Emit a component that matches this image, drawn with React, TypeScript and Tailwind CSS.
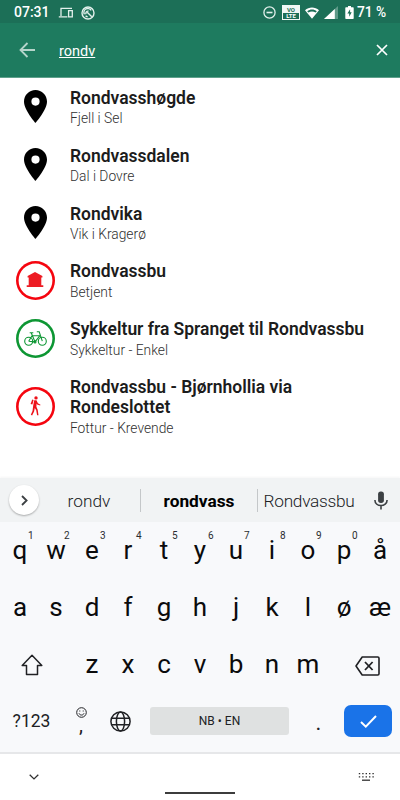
import type { ReactNode } from 'react';
import clsx from 'clsx';

type ResultIcon = 'pin' | 'cabin' | 'bike' | 'hike';

interface SearchResult {
  title: string;
  subtitle: string;
  icon: ResultIcon;
}

interface KeyDef {
  label: string;
  hint?: string;
}

const RESULTS: SearchResult[] = [
  { title: 'Rondvasshøgde', subtitle: 'Fjell i Sel', icon: 'pin' },
  { title: 'Rondvassdalen', subtitle: 'Dal i Dovre', icon: 'pin' },
  { title: 'Rondvika', subtitle: 'Vik i Kragerø', icon: 'pin' },
  { title: 'Rondvassbu', subtitle: 'Betjent', icon: 'cabin' },
  { title: 'Sykkeltur fra Spranget til Rondvassbu', subtitle: 'Sykkeltur - Enkel', icon: 'bike' },
  { title: 'Rondvassbu - Bjørnhollia via Rondeslottet', subtitle: 'Fottur - Krevende', icon: 'hike' },
];

const TOP_ROW: KeyDef[] = [
  { label: 'q', hint: '1' },
  { label: 'w', hint: '2' },
  { label: 'e', hint: '3' },
  { label: 'r', hint: '4' },
  { label: 't', hint: '5' },
  { label: 'y', hint: '6' },
  { label: 'u', hint: '7' },
  { label: 'i', hint: '8' },
  { label: 'o', hint: '9' },
  { label: 'p', hint: '0' },
  { label: 'å' },
];

const HOME_ROW: KeyDef[] = [...'asdfghjkløæ'].map((label) => ({ label }));
const BOTTOM_ROW: KeyDef[] = [...'zxcvbnm'].map((label) => ({ label }));

function StatusBar() {
  return (
    <div className="flex h-[23px] items-center bg-[#1c6f57] pt-[2px] pl-[14px] text-[14px] font-medium text-white">
      <span className="w-[44px] whitespace-nowrap">07:31</span>
      {/* Connected devices */}
      <svg className="h-[12px] w-[16px]" viewBox="0 0 16 12" fill="none" stroke="#e3f0ec" strokeWidth="1.3">
        <path d="M14 1.4H3V9M.8 9.9h8.6" />
        <path d="M10.6 3.7h3.7v6.2h-3.7z" />
      </svg>
      <svg className="ml-[7px] h-[14px] w-[14px]" viewBox="0 0 14 14" fill="none" stroke="#e3f0ec" strokeWidth="1.4">
        <circle cx="7" cy="7" r="6" />
        <path d="M3.4 8.4a3.8 3.8 0 0 1 6.8-4M5 8.2a2.2 2.2 0 0 1 2.6-3M6.2 6.2l4.6 4.6M4.6 10l2 .8" />
      </svg>
      {/* Do not disturb */}
      <svg className="ml-[168px] h-[13px] w-[13px]" viewBox="0 0 13 13" fill="none" stroke="#e3f0ec" strokeWidth="1.3">
        <circle cx="6.5" cy="6.5" r="5.6" />
        <path d="M3.5 6.5h6" strokeWidth="1.6" />
      </svg>
      <span className="ml-[6px] flex h-[15px] w-[18px] flex-col border border-[#f0f7f5] text-center text-[6px] leading-[7px] font-bold">
        <span className="h-[7px] bg-[#f0f7f5] text-[#1c6f57]">VO</span>
        <span className="h-[6px] leading-[6px]">LTE</span>
      </span>
      <svg className="ml-[5px] h-[12px] w-[14px]" viewBox="0 0 14 12">
        <path d="M0 3.2C4 -.4 10 -.4 14 3.2L7 11.8z" fill="#fff" />
        <path d="M2.2 4.2C5 2 9 2 11.8 4.2L10.6 5.6C8.5 4 5.5 4 3.4 5.6z" fill="#1c6f57" />
      </svg>
      <svg className="ml-[5px] h-[13px] w-[14px]" viewBox="0 0 14 13">
        <path d="M0 13 14 0v13z" fill="#5f9a89" />
        <path d="M0 13 10.8 3v10z" fill="#fff" />
      </svg>
      <svg className="ml-[7px] h-[13px] w-[9px]" viewBox="0 0 9 13">
        <path d="M3 0h3v1.3h2q.7 0 .7.7v10.3q0 .7-.7.7H1q-.7 0-.7-.7V2q0-.7.7-.7h2z" fill="#fff" />
        <path d="M5.1 3.2 2.4 7.6h1.8v3.2l2.5-4.5H5.1z" fill="#1c6f57" />
      </svg>
      <span className="ml-[3px] text-[13.8px] whitespace-nowrap">71 %</span>
    </div>
  );
}

function SearchBar() {
  return (
    <div className="flex h-[55px] items-center border-b border-[#5fa18c] bg-[#1e7b5f] pr-[12px] pl-[19px] text-white">
      <svg className="h-[16px] w-[16px]" viewBox="0 0 16 16" fill="none" stroke="#b5d5cb" strokeWidth="1.8">
        <path d="M8.5 1 1.5 8l7 7M1.5 8H16" />
      </svg>
      <span className="ml-[24px] pt-[3px] text-[14.5px] underline decoration-1 underline-offset-1">rondv</span>
      <svg className="ml-auto h-[12px] w-[12px]" viewBox="0 0 12 12" fill="none" stroke="#fff" strokeWidth="1.7">
        <path d="m1 1 10 10M11 1 1 11" />
      </svg>
    </div>
  );
}

function PinIcon() {
  return (
    <svg className="h-[33px] w-[23px]" viewBox="0 0 14 20" preserveAspectRatio="none">
      <path
        d="M7 0C3.13 0 0 3.13 0 7c0 5.25 7 13 7 13s7-7.75 7-13c0-3.87-3.13-7-7-7zm0 9.5a2.5 2.5 0 0 1 0-5 2.5 2.5 0 0 1 0 5z"
        fill="#000"
      />
    </svg>
  );
}

function RoundIcon({ green = false, children }: { green?: boolean; children: ReactNode }) {
  return (
    <span
      className={clsx(
        'flex size-[39px] items-center justify-center rounded-full',
        green ? 'shadow-[inset_0_0_0_2.6px_#0d9633]' : 'shadow-[inset_0_0_0_2.6px_#f5050f]'
      )}
    >
      {children}
    </span>
  );
}

function ResultGlyph({ icon }: { icon: ResultIcon }) {
  switch (icon) {
    case 'cabin':
      return (
        <RoundIcon>
          <svg className="mb-[2px] h-[15px] w-[18px]" viewBox="0 0 18 15" fill="#ed1c24">
            <path d="M9 0 16.4 4v1.6h-1.1v7.6h2V15H.7v-1.8h2V5.6H1.6V4z" />
          </svg>
        </RoundIcon>
      );
    case 'bike':
      return (
        <RoundIcon green>
          <svg className="h-[15px] w-[23px]" viewBox="0 0 23 15" fill="none" stroke="#0d9633" strokeWidth="1.1">
            <circle cx="4.7" cy="10.2" r="4" />
            <circle cx="18.3" cy="10.2" r="4" />
            <path d="M4.7 10.2 8 4.8h7.8L11 10.9 7.3 2M4.7 10.2l6.3.7M18.3 10.2 15.2.8h-2.4M5.7 1.8h3.6" />
            <circle cx="11" cy="10.9" r="1" />
          </svg>
        </RoundIcon>
      );
    case 'hike':
      return (
        <RoundIcon>
          <svg className="h-[20px] w-[11px]" viewBox="0 0 11 20" fill="#ed1119">
            <circle cx="6" cy="1.9" r="1.7" />
            <path d="M2.2 3.4 3.6 4 2.4 8.6.6 8.1z" />
            <path d="M4.2 4.3h2.3l1.4 3 2.6 1.4-.4.9-3-1.2-.5-.8-.2 3.1 1.3 3 .8 5.6H7.1l-.9-5-1.4-2.3-.7 3.4-2 4.1-1.3-.7 1.7-3.8.7-5.5z" />
          </svg>
        </RoundIcon>
      );
    default:
      return <PinIcon />;
  }
}

function ResultRow({ title, subtitle, icon }: SearchResult) {
  return (
    <li className="flex items-center pt-[8px] pr-[30px] pb-[7px]">
      <span className="flex w-[70px] shrink-0 justify-center pb-[1px]">
        <ResultGlyph icon={icon} />
      </span>
      <div className="min-w-0 pt-[2px]">
        <p className="text-[17.5px] leading-[20.4px] font-semibold tracking-[-0.02px] text-[#1c1c1c]">{title}</p>
        <p className="pt-[1px] text-[13.8px] leading-[19.4px] font-[350] text-[#303030]">{subtitle}</p>
      </div>
    </li>
  );
}

function SuggestionBar() {
  return (
    <div className="flex h-[44px] items-center bg-[#f1f3f4] text-[17.3px] text-[#202124] shadow-[0_-1px_2px_rgba(0,0,0,0.04)]">
      <span className="ml-[9px] flex size-[30px] shrink-0 items-center justify-center rounded-full bg-white shadow-[0_1px_2px_rgba(0,0,0,0.3)]">
        <svg className="h-[11px] w-[7px]" viewBox="0 0 7 11" fill="none" stroke="#3c4043" strokeWidth="1.8">
          <path d="m1 1 4.6 4.5L1 10" />
        </svg>
      </span>
      <span className="ml-[-1px] w-[102px] pt-[3px] text-center font-[350]">rondv</span>
      <span className="h-[23px] w-px bg-[#c4c7c9]" />
      <span className="w-[116px] pt-[3px] text-center font-bold text-black">rondvass</span>
      <span className="h-[23px] w-px bg-[#c4c7c9]" />
      <span className="w-[102px] pt-[3px] text-center font-[350] tracking-[-0.3px]">Rondvassbu</span>
      <svg className="ml-[14px] h-[19px] w-[14px]" viewBox="0 0 14 19" fill="none" stroke="#3c4043">
        <rect x="4.1" y=".5" width="5.8" height="11.5" rx="2.7" fill="#3c4043" stroke="none" />
        <path d="M.9 9c0 7.4 12.2 7.4 12.2 0M7 14.6v4" strokeWidth="1.6" />
      </svg>
    </div>
  );
}

function Key({ label, hint }: KeyDef) {
  return (
    <span className="relative flex h-[57px] w-[36px] items-center justify-center pb-[2px] text-[26px] leading-none text-[#0b0b0c]">
      {label}
      {hint && <span className="absolute top-[9px] left-[26px] text-[10px] leading-none text-[#2b2d30]">{hint}</span>}
    </span>
  );
}

function KeyRow({ keys }: { keys: KeyDef[] }) {
  return (
    <div className="flex justify-center">
      {keys.map((key) => (
        <Key key={key.label} {...key} />
      ))}
    </div>
  );
}

function FunctionRow() {
  return (
    <div className="flex h-[56px] items-center text-[#202124]">
      <span className="w-[62px] pl-[1px] text-center text-[17.5px]">?123</span>
      <span className="flex w-[38px] flex-col items-center">
        <svg className="h-[11px] w-[11px]" viewBox="0 0 11 11" fill="none" stroke="#202124" strokeWidth="1">
          <circle cx="5.5" cy="5.5" r="4.8" />
          <path d="M3 6.4c.9 2.2 4.1 2.2 5 0" />
          <path d="M3.3 4h1M6.7 4h1" strokeWidth="1.2" />
        </svg>
        <span className="h-[17px] text-[20px] leading-[14px]">,</span>
      </span>
      <span className="flex w-[41px] justify-center">
        <svg className="h-[21px] w-[21px]" viewBox="0 0 21 21" fill="none" stroke="#202124" strokeWidth="1.5">
          <circle cx="10.5" cy="10.5" r="9.6" />
          <ellipse cx="10.5" cy="10.5" rx="4.1" ry="9.6" />
          <path d="M1.5 7.2h18M1.5 13.8h18" />
        </svg>
      </span>
      <span className="ml-[9px] flex h-[28px] w-[139px] items-center justify-center rounded-[3px] bg-[#dfe1e1] text-[12px]">
        NB • EN
      </span>
      <span className="w-[55px] pt-[2px] pl-[4px] text-center text-[22px]">.</span>
      <span className="flex h-[32px] w-[48px] items-center justify-center rounded-[7px] bg-[#1a73e8]">
        <svg className="h-[13px] w-[17px]" viewBox="0 0 17 13" fill="none" stroke="#fff" strokeWidth="2">
          <path d="m1 7 4.8 4.6L16 1" />
        </svg>
      </span>
    </div>
  );
}

function Keyboard() {
  return (
    <div className="flex h-[232px] flex-col border-b-2 border-[#e6e7e9] bg-[#f8f9fb]">
      <KeyRow keys={TOP_ROW} />
      <KeyRow keys={HOME_ROW} />
      <div className="flex items-center">
        <span className="flex w-[74px] justify-center pr-[10px]">
          <svg className="h-[22px] w-[22px]" viewBox="0 0 22 22" fill="none" stroke="#202124" strokeWidth="1.5" strokeLinejoin="round">
            <path d="M11 1.2 1.2 11.5h4.3v9h11v-9h4.3z" />
          </svg>
        </span>
        <KeyRow keys={BOTTOM_ROW} />
        <span className="flex flex-1 justify-center pt-[2px] pl-[8px]">
          <svg className="h-[20px] w-[25px]" viewBox="0 0 25 20" fill="none" stroke="#202124" strokeWidth="1.6" strokeLinejoin="round">
            <path d="M7.2 1h15.6q1.2 0 1.2 1.2v15.6q0 1.2-1.2 1.2H7.2L1 10z" />
            <path d="m10 6 7.6 8M17.6 6 10 14" strokeWidth="1.8" />
          </svg>
        </span>
      </div>
      <FunctionRow />
    </div>
  );
}

function NavigationBar() {
  return (
    <div className="flex h-[46px] justify-between bg-white pr-[26px] pl-[29px]">
      <svg className="mt-[20px] h-[6px] w-[10px]" viewBox="0 0 10 6" fill="none" stroke="#303030" strokeWidth="1.3">
        <path d="m.7.7 4.3 4.2L9.3.7" />
      </svg>
      <span className="mt-[38px] ml-[3px] h-[2px] w-[70px] bg-[#3c3c3c]" />
      <svg className="mt-[19px] h-[8px] w-[16px]" viewBox="0 0 16 8" fill="none" stroke="#303030">
        <path d="M.8.7h15M.8 3.8h15" strokeWidth="1.2" strokeDasharray="1.4 2" />
        <path d="M4 7.2h8" strokeWidth="1.3" />
      </svg>
    </div>
  );
}

export default function App() {
  return (
    <div className="flex h-[800px] w-[400px] flex-col overflow-hidden bg-white font-[Roboto,sans-serif]">
      <StatusBar />
      <SearchBar />
      <ul className="h-[400px] shrink-0">
        {RESULTS.map((result) => (
          <ResultRow key={result.title} {...result} />
        ))}
      </ul>
      <SuggestionBar />
      <Keyboard />
      <NavigationBar />
    </div>
  );
}
